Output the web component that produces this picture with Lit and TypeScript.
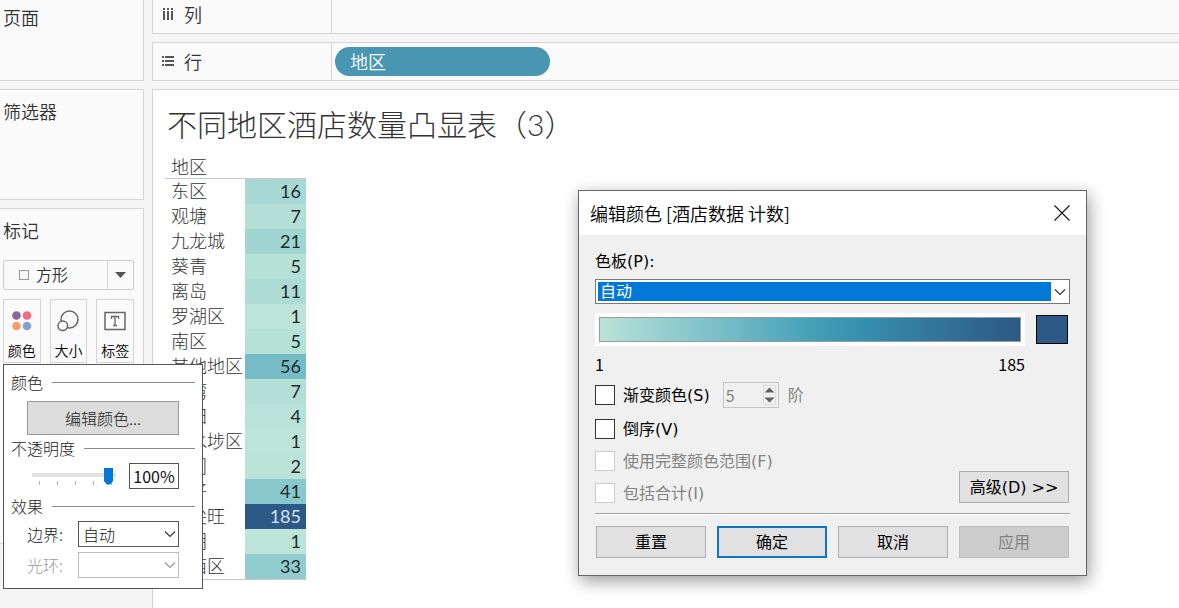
import { LitElement, html, css, svg } from "lit";
import { customElement } from "lit/decorators.js";
import { styleMap } from "lit/directives/style-map.js";

const RAMP = [
  "#bce4d8", "#aedcd5", "#a1d5d2", "#95cecf", "#89c8cc", "#7ec1ca", "#72bac6",
  "#66b2c2", "#59acbe", "#4ba5ba", "#419eb6", "#3b96b2", "#358ead", "#3586a7",
  "#347ea1", "#32779b", "#316f96", "#2f6790", "#2d608a", "#2c5985",
];

const DISTRICTS: [string, number][] = [
  ["东区", 16], ["观塘", 7], ["九龙城", 21], ["葵青", 5], ["离岛", 11],
  ["罗湖区", 1], ["南区", 5], ["其他地区", 56], ["荃湾", 7], ["沙田", 4],
  ["深水埗区", 1], ["屯门", 2], ["湾仔", 41], ["油尖旺", 185], ["元朗", 1],
  ["中西区", 33],
];

const MIN = 1;
const MAX = 185;

/** Blends two neighbouring ramp stops for a value between MIN and MAX. */
function rampColor(value: number): string {
  const at = ((value - MIN) / (MAX - MIN)) * (RAMP.length - 1);
  const low = Math.floor(at);
  const high = Math.min(low + 1, RAMP.length - 1);
  const part = (hex: string, i: number) => parseInt(hex.slice(1 + i * 2, 3 + i * 2), 16);
  const mix = [0, 1, 2].map((i) =>
    Math.round(part(RAMP[low], i) + (part(RAMP[high], i) - part(RAMP[low], i)) * (at - low)));
  return `rgb(${mix.join(",")})`;
}

const chevron = svg`<path d="M1 1.5 L6 6.5 L11 1.5" fill="none" stroke="currentColor" stroke-width="1.2"/>`;

const base = css`
  * { box-sizing: border-box; }
  button, input, select { font: inherit; color: inherit; margin: 0; }
  svg { display: block; }
  .combo { display: grid; align-items: center; }
  .combo > * { grid-area: 1 / 1; }
  .combo > svg { justify-self: end; pointer-events: none; }
  .combo select { appearance: none; width: 100%; border-radius: 0; background: #fff; }
  .combo select:disabled { opacity: 1; }
`;

@customElement("color-menu")
class ColorMenu extends LitElement {
  static styles = [base, css`
    :host {
      display: block; box-sizing: border-box; width: 200px; padding: 7px 7px 10px;
      border: 1px solid #555; background: #fff; color: #222;
      font: 300 16px/20px "Noto Sans CJK SC", sans-serif;
    }
    .heading { display: flex; align-items: center; gap: 9px; margin: 0; font: inherit; }
    .heading::after { content: ""; flex: 1; height: 1px; background: #8a8a8a; }
    .block { padding: 9px 16px 3px; }
    .edit { display: block; width: 100%; height: 34px; border: 1px solid #999; background: #dcdcdc; padding: 0; }
    .opacity { display: flex; align-items: center; justify-content: space-between; padding: 5px 16px 7px 21px; }
    .slider {
      width: 84px; height: 18px; padding: 0 3px;
      background:
        linear-gradient(#e2e2e2, #e2e2e2) 0 6px / 84px 4px no-repeat,
        repeating-linear-gradient(90deg, #b5b5b5 0 1px, transparent 1px 18px) 7px 14px / 77px 4px no-repeat;
    }
    .slider input { appearance: none; display: block; width: 100%; height: 18px; background: none; }
    .slider input::-webkit-slider-thumb {
      appearance: none; width: 9px; height: 17px; background: #0078d7;
      clip-path: polygon(0 0, 100% 0, 100% 80%, 70% 100%, 30% 100%, 0 80%);
    }
    .percent {
      width: 50px; height: 26px; padding: 0 2px; border: 1px solid #555; color: #111;
      font: 400 16px/20px "Noto Sans CJK SC", sans-serif; text-align: center;
    }
    .fields { display: grid; grid-template-columns: 51px 1fr; gap: 5px 0; align-items: center; padding: 5px 16px 0; }
    .combo select { height: 26px; padding: 0 4px; border: 1px solid #555; color: #111; }
    .combo > svg { margin-right: 3px; color: #333; }
    .off { color: #999; }
    .combo.off select { border-color: #bbb; }
    .combo.off > svg { color: #999; }
  `];

  render() {
    return html`
      <h3 class="heading">颜色</h3>
      <div class="block"><button class="edit">编辑颜色...</button></div>
      <h3 class="heading">不透明度</h3>
      <div class="opacity">
        <div class="slider"><input type="range" min="0" max="100" value="100" aria-label="不透明度"></div>
        <input class="percent" type="text" value="100%" aria-label="不透明度">
      </div>
      <h3 class="heading">效果</h3>
      <div class="fields">
        <label for="border">边界:</label>
        <div class="combo">
          <select id="border"><option>自动</option></select>
          <svg width="12" height="8">${chevron}</svg>
        </div>
        <label class="off" for="halo">光环:</label>
        <div class="combo off">
          <select id="halo" disabled><option></option></select>
          <svg width="12" height="8">${chevron}</svg>
        </div>
      </div>`;
  }
}

@customElement("color-dialog")
class ColorDialog extends LitElement {
  static styles = [base, css`
    :host {
      display: block; box-sizing: border-box; width: 509px; border: 1px solid #666;
      background: #f0f0f0; color: #000; box-shadow: 2px 5px 16px rgba(0, 0, 0, .4);
      font: 400 16px/20px "DejaVu Sans", "Noto Sans CJK SC", sans-serif;
    }
    .title { display: flex; align-items: center; justify-content: space-between; height: 44px; padding: 0 16px 1px 11px; background: #fff; }
    .title h2 { margin: 0; font: 350 18px/24px "Noto Sans CJK SC", sans-serif; }
    .close { padding: 0; border: 0; background: none; }
    .body { padding: 17px 16px; }
    .label { display: block; margin-bottom: 7px; }
    .combo select {
      height: 25px; padding: 1px 4px 0; border: 1px solid #777; color: #fff;
      background: linear-gradient(#0078d7, #0078d7) 2px 2px / calc(100% - 20px) calc(100% - 4px) no-repeat #fff;
    }
    .combo > svg { margin-right: 4px; color: #333; }
    .preview { display: flex; align-items: center; gap: 11px; padding: 9px 2px 8px 0; }
    .ramp { flex: 1; padding: 4px; background: #fff; }
    .bar { height: 25px; border: 1px solid #9a9a9a; }
    .swatch { width: 32px; height: 29px; border: 1px solid #000; background: #2c5985; padding: 0; }
    .range { display: flex; justify-content: space-between; padding-right: 45px; margin-bottom: 9px; font-family: "Noto Sans CJK SC", sans-serif; }
    .settings { display: flex; justify-content: space-between; align-items: flex-end; padding-right: 1px; }
    .options { display: flex; flex-direction: column; gap: 12px; }
    .row { display: flex; align-items: center; height: 20px; }
    .row.tall { height: 24px; }
    .row label { display: flex; align-items: center; gap: 8px; line-height: 22px; }
    .row span { padding-top: 2px; }
    .row input[type="checkbox"] { appearance: none; width: 20px; height: 20px; border: 1px solid #333; background: #fff; }
    .row input[type="checkbox"]:disabled { border-color: #ccc; }
    .off { color: #838383; }
    .stepper { display: flex; align-items: center; height: 26px; width: 56px; margin: 0 9px 0 13px; padding: 0 2px; border: 1px solid #c5c5c5; font-family: "Noto Sans CJK SC", sans-serif; }
    .stepper input { flex: 1; min-width: 0; width: 0; padding: 0; border: 0; background: none; color: #838383; appearance: textfield; }
    .stepper input::-webkit-inner-spin-button { appearance: none; }
    .push { height: 32px; padding: 2px 0 0; border: 1px solid #adadad; background: #e1e1e1; }
    .push:disabled { background: #ccc; border-color: #bfbfbf; color: #838383; }
    .push.main { border: 2px solid #0f74c8; }
    .more { width: 110px; }
    .rule { height: 2px; margin: 10px 0 11px; border: 0; border-top: 1px solid #a0a0a0; background: #fff; }
    .actions { display: grid; grid-template-columns: repeat(4, 1fr); gap: 11px; padding: 0 1px; }
  `];

  render() {
    return html`
      <div class="title">
        <h2>编辑颜色 [酒店数据 计数]</h2>
        <button class="close" aria-label="关闭">
          <svg width="16" height="16"><path d="M0.5 0.5 L15.5 15.5 M15.5 0.5 L0.5 15.5" stroke="#111" stroke-width="1.1"/></svg>
        </button>
      </div>
      <div class="body">
        <label class="label" for="palette">色板(P):</label>
        <div class="combo">
          <select id="palette"><option>自动</option></select>
          <svg width="12" height="8">${chevron}</svg>
        </div>
        <div class="preview">
          <div class="ramp"><div class="bar" style=${styleMap({ background: `linear-gradient(90deg, ${RAMP.join(",")})` })}></div></div>
          <button class="swatch" aria-label="颜色"></button>
        </div>
        <div class="range"><span>${MIN}</span><span>${MAX}</span></div>
        <div class="settings">
          <div class="options">
            <div class="row tall">
              <label><input type="checkbox"><span>渐变颜色(S)</span></label>
              <div class="stepper">
                <input type="number" value="5" disabled aria-label="阶">
                <svg width="13" height="20"><path d="M.5 .5H12.5V19.5H.5Z" fill="none" stroke="#dcdcdc"/><path d="M1.500 7.500 6.500 2.500 11.500 7.500Z M1.500 12.500 6.500 17.500 11.500 12.500Z" fill="#606060"/></svg>
              </div>
              <span class="off">阶</span>
            </div>
            <div class="row"><label><input type="checkbox"><span>倒序(V)</span></label></div>
            <div class="row"><label class="off"><input type="checkbox" disabled><span>使用完整颜色范围(F)</span></label></div>
            <div class="row"><label class="off"><input type="checkbox" disabled><span>包括合计(I)</span></label></div>
          </div>
          <button class="push more">高级(D) &gt;&gt;</button>
        </div>
        <hr class="rule">
        <div class="actions">
          <button class="push">重置</button>
          <button class="push main">确定</button>
          <button class="push">取消</button>
          <button class="push" disabled>应用</button>
        </div>
      </div>`;
  }
}

@customElement("app-root")
class AppRoot extends LitElement {
  static styles = [base, css`
    :host {
      display: grid; grid-template-columns: 144px 1fr; gap: 8px; position: relative;
      min-height: 100vh; box-sizing: border-box; overflow: hidden; background: #f5f5f5; color: #333;
      font: 350 18px/24px "Noto Sans CJK SC", sans-serif;
    }
    .side { display: flex; flex-direction: column; gap: 8px; position: relative; z-index: 1; }
    .card { border: 1px solid #d4d4d4; border-left: 0; background: #fafafa; padding: 9px 9px 0 3px; }
    .card h2, .shelf h2 { margin: 0; font: inherit; }
    .pages { height: 81px; border-top: 0; padding-top: 5px; }
    .filters { height: 111px; }
    .marks { position: relative; height: 336px; }
    .kind { margin: 18px 0 9px; color: #333; }
    .kind select { height: 30px; padding: 0 0 2px 32px; border: 1px solid #ccc; border-radius: 2px; background: none; font-size: 16px; }
    .kind .square { justify-self: start; margin-left: 16px; }
    .tiles { display: grid; grid-template-columns: repeat(3, 1fr); gap: 9px; }
    .tile {
      display: flex; flex-direction: column; align-items: center; justify-content: space-between;
      height: 64px; padding: 9px 0 2px; border: 1px solid #d4d4d4; background: #fafafa;
      color: #000; font-size: 14px; line-height: 20px;
    }
    color-menu { position: absolute; left: 3px; top: 155px; }
    .work { display: flex; flex-direction: column; gap: 8px; min-width: 0; }
    .shelf { display: flex; height: 39px; border: 1px solid #d4d4d4; border-right: 0; background: #fafafa; }
    .shelf.first { height: 34px; border-top: 0; padding-bottom: 4px; }
    .name { display: flex; align-items: center; gap: 10px; width: 179px; padding: 0 0 2px 9px; border-right: 1px solid #d4d4d4; }
    .first .name { margin-bottom: -4px; padding-bottom: 6px; }
    .drop { flex: 1; display: flex; align-items: center; padding-left: 3px; }
    .pill { width: 215px; height: 29px; padding: 0 15px 2px; border: 0; border-radius: 15px; background: #4996b2; color: #fff; text-align: left; }
    .view { flex: 1; padding: 12px 12px; border: 1px solid #d4d4d4; border-right: 0; border-bottom: 0; background: #fff; }
    .view h1 { margin: 0 0 8px 2px; font: 300 30px/44px Lato, "Noto Sans CJK SC", sans-serif; }
    table { border-collapse: separate; border-spacing: 0; width: 141px; table-layout: fixed; border-bottom: 1px solid #c8c8c8; font-weight: 300; line-height: 20px; }
    th, td { height: 25px; padding: 0 0 4px; vertical-align: middle; }
    th { padding-left: 6px; text-align: left; font-weight: 300; white-space: nowrap; }
    thead th { padding-bottom: 1px; border-bottom: 1px solid #c8c8c8; }
    .district { width: 80px; }
    .count { padding: 0 5px 2px 0; text-align: right; font-family: Lato, sans-serif; font-weight: 400; color: #1c2c2c; }
    .count.light { color: #d5e0ec; }
    color-dialog { position: absolute; left: 578px; top: 190px; z-index: 2; }
  `];

  render() {
    return html`
      <aside class="side">
        <section class="card pages"><h2>页面</h2></section>
        <section class="card filters"><h2>筛选器</h2></section>
        <section class="card marks">
          <h2>标记</h2>
          <div class="combo kind">
            <select aria-label="标记"><option>方形</option></select>
            <svg class="square" width="10" height="10"><rect x=".5" y=".5" width="9" height="9" fill="none" stroke="#999"/></svg>
            <svg width="27" height="30"><path d="M.5 1V29" stroke="#d4d4d4"/><path d="M8 12H19L13.500 18Z" fill="#555"/></svg>
          </div>
          <div class="tiles">
            <button class="tile">
              <svg width="24" height="24"><circle cx="6.500" cy="6.500" r="4.300" fill="#85679b"/><circle cx="17" cy="6.500" r="4.300" fill="#ed6b7d"/><circle cx="6.500" cy="17" r="4.300" fill="#f4a06c"/><circle cx="17" cy="17" r="4.300" fill="#7fa3cc"/></svg>
              颜色
            </button>
            <button class="tile">
              <svg width="24" height="24" fill="#fafafa" stroke="#666" stroke-width="1.500"><circle cx="13.500" cy="10.500" r="8.500"/><circle cx="6.800" cy="16.800" r="4.800"/></svg>
              大小
            </button>
            <button class="tile">
              <svg width="24" height="24" fill="none" stroke="#666"><rect x="2" y="3.500" width="20" height="17" stroke-width="1.500"/><path d="M8.500 10V7.500H15.500V10M12 7.500V16.500M10 16.500H14" stroke-width="1.300"/></svg>
              标签
            </button>
          </div>
          <color-menu></color-menu>
        </section>
      </aside>
      <main class="work">
        <section class="shelf first">
          <div class="name">
            <svg width="12" height="12" fill="#555"><path d="M1 0h2v2H1zM5 0h2v2H5zM9 0h2v2H9zM1 3h2v9H1zM5 3h2v9H5zM9 3h2v9H9z"/></svg>
            <h2>列</h2>
          </div>
          <div class="drop"></div>
        </section>
        <section class="shelf">
          <div class="name">
            <svg width="12" height="12" fill="#555"><path d="M0 1h2v2H0zM0 5h2v2H0zM0 9h2v2H0zM3 1h9v2H3zM3 5h9v2H3zM3 9h9v2H3z"/></svg>
            <h2>行</h2>
          </div>
          <div class="drop"><button class="pill">地区</button></div>
        </section>
        <section class="view">
          <h1>不同地区酒店数量凸显表（3）</h1>
          <table>
            <thead><tr><th class="district">地区</th><th></th></tr></thead>
            <tbody>
              ${DISTRICTS.map(([name, count]) => html`
                <tr>
                  <th>${name}</th>
                  <td class=${count > 100 ? "count light" : "count"} style=${styleMap({ background: rampColor(count) })}>${count}</td>
                </tr>`)}
            </tbody>
          </table>
        </section>
      </main>
      <color-dialog></color-dialog>`;
  }
}
